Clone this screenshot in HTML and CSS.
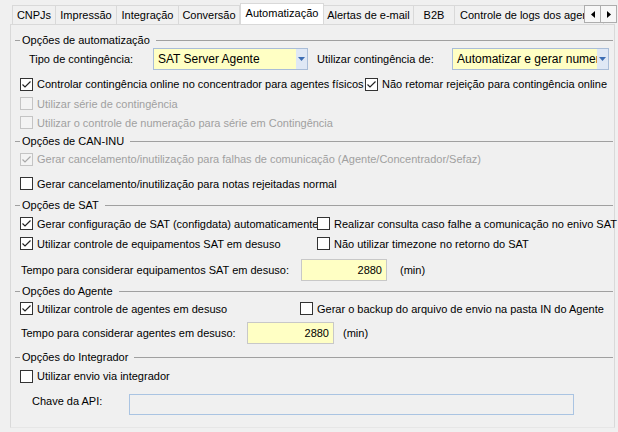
FILE: index.html
```html
<!DOCTYPE html>
<html lang="pt">
<head>
<meta charset="utf-8">
<link rel="stylesheet" href="styles.css">
</head>
<body>
<div class="tabstrip">
  <div class="tab w44">CNPJs</div>
  <div class="tab w62">Impressão</div>
  <div class="tab w63">Integração</div>
  <div class="tab w62">Conversão</div>
  <div class="tab sel">Automatização</div>
  <div class="tab w91 after-sel">Alertas de e-mail</div>
  <div class="tab w42">B2B</div>
  <div class="tab wlast">Controle de logs dos agentes</div>
  <div class="scroller">
    <span class="sbtn"><svg width="4" height="7" viewBox="0 0 4 7"><path d="M4 0 L0 3.5 L4 7 Z" fill="#000"/></svg></span>
    <span class="sbtn"><svg width="4" height="7" viewBox="0 0 4 7"><path d="M0 0 L4 3.5 L0 7 Z" fill="#000"/></svg></span>
  </div>
</div>
<div class="panel">
  <div class="ghead mt8"><span class="gtitle">Opções de automatização</span></div>
  <div class="row h24">
    <span class="lbl lbl-tipo">Tipo de contingência:</span>
    <span class="combo combo1"><span class="ctext">SAT Server Agente</span><span class="cbtn"><svg width="7" height="4" viewBox="0 0 7 4"><path d="M0 0 L7 0 L3.5 4 Z" fill="#3c6db3"/></svg></span></span>
    <span class="lbl lbl-util">Utilizar contingência de:</span>
    <span class="combo combo2"><span class="ctext">Automatizar e gerar numeração</span><span class="cbtn"><svg width="7" height="4" viewBox="0 0 7 4"><path d="M0 0 L7 0 L3.5 4 Z" fill="#3c6db3"/></svg></span></span>
  </div>
  <div class="row h20 mt3 cbrow">
    <span class="cell c345"><span class="cb"><svg width="11" height="11" viewBox="0 0 11 11"><path d="M1.5 5.5 L4 8 L9.5 2.5" fill="none" stroke="#222" stroke-width="1.2"/></svg></span><span class="cbl">Controlar contingência online no concentrador para agentes físicos</span></span>
    <span class="cell"><span class="cb"><svg width="11" height="11" viewBox="0 0 11 11"><path d="M1.5 5.5 L4 8 L9.5 2.5" fill="none" stroke="#222" stroke-width="1.2"/></svg></span><span class="cbl">Não retomar rejeição para contingência online</span></span>
  </div>
  <div class="row h19 cbrow dis">
    <span class="cell"><span class="cb"></span><span class="cbl">Utilizar série de contingência</span></span>
  </div>
  <div class="row h19 cbrow dis">
    <span class="cell"><span class="cb"></span><span class="cbl">Utilizar o controle de numeração para série em Contingência</span></span>
  </div>

  <div class="ghead mt2"><span class="gtitle">Opções de CAN-INU</span></div>
  <div class="row h20 mt1 cbrow dis">
    <span class="cell"><span class="cb"><svg width="11" height="11" viewBox="0 0 11 11"><path d="M1.5 5.5 L4 8 L9.5 2.5" fill="none" stroke="#a8a8a8" stroke-width="1.2"/></svg></span><span class="cbl">Gerar cancelamento/inutilização para falhas de comunicação (Agente/Concentrador/Sefaz)</span></span>
  </div>
  <div class="row h21 mt4 cbrow">
    <span class="cell"><span class="cb"></span><span class="cbl">Gerar cancelamento/inutilização para notas rejeitadas normal</span></span>
  </div>

  <div class="ghead mt4"><span class="gtitle">Opções de SAT</span></div>
  <div class="row h19 mt2 cbrow">
    <span class="cell c297"><span class="cb"><svg width="11" height="11" viewBox="0 0 11 11"><path d="M1.5 5.5 L4 8 L9.5 2.5" fill="none" stroke="#222" stroke-width="1.2"/></svg></span><span class="cbl">Gerar configuração de SAT (configdata) automaticamente</span></span>
    <span class="cell"><span class="cb"></span><span class="cbl">Realizar consulta caso falhe a comunicação no enivo SAT</span></span>
  </div>
  <div class="row h19 mt1 cbrow">
    <span class="cell c297"><span class="cb"><svg width="11" height="11" viewBox="0 0 11 11"><path d="M1.5 5.5 L4 8 L9.5 2.5" fill="none" stroke="#222" stroke-width="1.2"/></svg></span><span class="cbl">Utilizar controle de equipamentos SAT em desuso</span></span>
    <span class="cell"><span class="cb"></span><span class="cbl">Não utilizar timezone no retorno do SAT</span></span>
  </div>
  <div class="row h24 mt5">
    <span class="lbl lbl-tsat">Tempo para considerar equipamentos SAT em desuso:</span>
    <span class="num num-sat">2880</span>
    <span class="lbl unit-sat">(min)</span>
  </div>

  <div class="ghead mt2"><span class="gtitle">Opções do Agente</span></div>
  <div class="row h19 mt1 cbrow">
    <span class="cell c280"><span class="cb"><svg width="11" height="11" viewBox="0 0 11 11"><path d="M1.5 5.5 L4 8 L9.5 2.5" fill="none" stroke="#222" stroke-width="1.2"/></svg></span><span class="cbl">Utilizar controle de agentes em desuso</span></span>
    <span class="cell"><span class="cb"></span><span class="cbl">Gerar o backup do arquivo de envio na pasta IN do Agente</span></span>
  </div>
  <div class="row h24 mt3">
    <span class="lbl lbl-tag">Tempo para considerar agentes em desuso:</span>
    <span class="num num-ag">2880</span>
    <span class="lbl unit-ag">(min)</span>
  </div>

  <div class="ghead mt5"><span class="gtitle">Opções do Integrador</span></div>
  <div class="row h20 mt2 cbrow">
    <span class="cell"><span class="cb"></span><span class="cbl">Utilizar envio via integrador</span></span>
  </div>
  <div class="row h24 mt6 top">
    <span class="lbl lbl-chave">Chave da API:</span>
    <span class="apikey"></span>
  </div>
</div>
</body>
</html>
```

FILE: styles.css
```css
html, body {
  margin: 0;
  padding: 0;
}
body {
  width: 618px;
  height: 432px;
  overflow: hidden;
  background: #f0f0f0;
  font-family: "Liberation Sans", Arial, sans-serif;
  font-size: 11px;
  color: #000;
}
.tabstrip {
  position: relative;
  display: flex;
  align-items: flex-end;
  height: 24px;
  padding-left: 12px;
  overflow: hidden;
  width: 606px;
}
.tab {
  box-sizing: border-box;
  height: 19px;
  border: 1px solid #d9d9d9;
  border-bottom: none;
  margin-left: -1px;
  background: #f0f0f0;
  text-align: center;
  line-height: 18px;
  white-space: nowrap;
  flex: none;
}
.tab.w44 { width: 44px; margin-left: 0; }
.tab.w62 { width: 62px; }
.tab.w63 { width: 63px; }
.tab.w91 { width: 91px; }
.tab.w42 { width: 42px; }
.tab.wlast { width: 150px; text-align: left; padding-left: 5px; }
.tab.sel {
  position: relative;
  z-index: 1;
  width: 84px;
  height: 22px;
  margin-left: 0;
  margin-bottom: -1px;
  background: #ffffff;
  line-height: 18px;
  padding-bottom: 4px;
}
.tab.after-sel { margin-left: -1px; }
.scroller {
  position: absolute;
  left: 584px;
  top: 5px;
  display: flex;
  z-index: 2;
}
.sbtn {
  box-sizing: border-box;
  width: 17px;
  height: 18px;
  border: 1px solid #adadad;
  background: #f7f7f7;
  display: flex;
  align-items: center;
  justify-content: center;
  margin-right: -1px;
}
.panel {
  box-sizing: border-box;
  margin-left: 10px;
  width: 605px;
  height: 404px;
  border: 1px solid #d9d9d9;
  border-bottom-color: #e6e6e6;
  padding-left: 4px;
  padding-top: 0;
  display: flex;
  flex-direction: column;
}
.ghead {
  display: flex;
  align-items: center;
  height: 14px;
  width: 598px;
  flex: none;
}
.ghead::before {
  content: "";
  width: 5px;
  border-top: 1px solid #a0a0a0;
}
.ghead::after {
  content: "";
  flex: 1;
  border-top: 1px solid #a0a0a0;
}
.gtitle {
  padding: 0 6px 0 2px;
  white-space: nowrap;
}
.row {
  display: flex;
  align-items: center;
  flex: none;
  white-space: nowrap;
}
.row.top { align-items: flex-start; }
.h19 { height: 19px; }
.h20 { height: 20px; }
.h21 { height: 21px; }
.h24 { height: 24px; }
.mt1 { margin-top: 1px; }
.mt2 { margin-top: 2px; }
.mt3 { margin-top: 3px; }
.mt4 { margin-top: 4px; }
.mt5 { margin-top: 5px; }
.mt6 { margin-top: 6px; }
.mt8 { margin-top: 8px; }
.cbrow { padding-left: 5px; }
.cell {
  display: flex;
  align-items: center;
  flex: none;
}
.c345 { width: 345px; }
.c297 { width: 297px; }
.c280 { width: 280px; }
.cb {
  box-sizing: border-box;
  width: 13px;
  height: 13px;
  border: 1px solid #333;
  background: #fff;
  display: flex;
  align-items: center;
  justify-content: center;
  flex: none;
}
.cbl { margin-left: 4px; }
.dis { color: #a0a0a0; }
.dis .cb { border-color: #c4c4c4; background: #f3f3f3; }
.lbl { flex: none; }
.lbl-tipo { margin-left: 14px; width: 124px; }
.lbl-util { margin-left: 9px; width: 135px; }
.combo {
  box-sizing: border-box;
  height: 22px;
  border: 1px solid #a9bdd8;
  background: #ffffc4;
  display: flex;
  align-items: center;
  flex: none;
}
.combo1 { width: 155px; }
.combo2 { width: 157px; }
.ctext {
  flex: 1;
  overflow: hidden;
  padding-left: 4px;
  font-size: 12px;
}
.cbtn {
  width: 10px;
  align-self: stretch;
  background: #dfe8f5;
  display: flex;
  align-items: center;
  justify-content: center;
  padding-right: 1px;
}
.lbl-tsat { margin-left: 6px; width: 280px; }
.lbl-tag { margin-left: 6px; width: 226px; }
.num {
  box-sizing: border-box;
  height: 22px;
  border: 1px solid #c8c8c8;
  background: #ffffc4;
  text-align: right;
  padding-right: 4px;
  line-height: 20px;
  flex: none;
}
.num-sat { width: 86px; }
.num-ag { width: 87px; }
.unit-sat { margin-left: 13px; }
.unit-ag { margin-left: 9px; }
.lbl-chave { margin-left: 17px; width: 97px; padding-top: 3px; }
.apikey {
  box-sizing: border-box;
  width: 445px;
  height: 21px;
  margin-top: 2px;
  border: 1px solid #aac4e2;
  background: #f0f0f0;
  flex: none;
}
```
